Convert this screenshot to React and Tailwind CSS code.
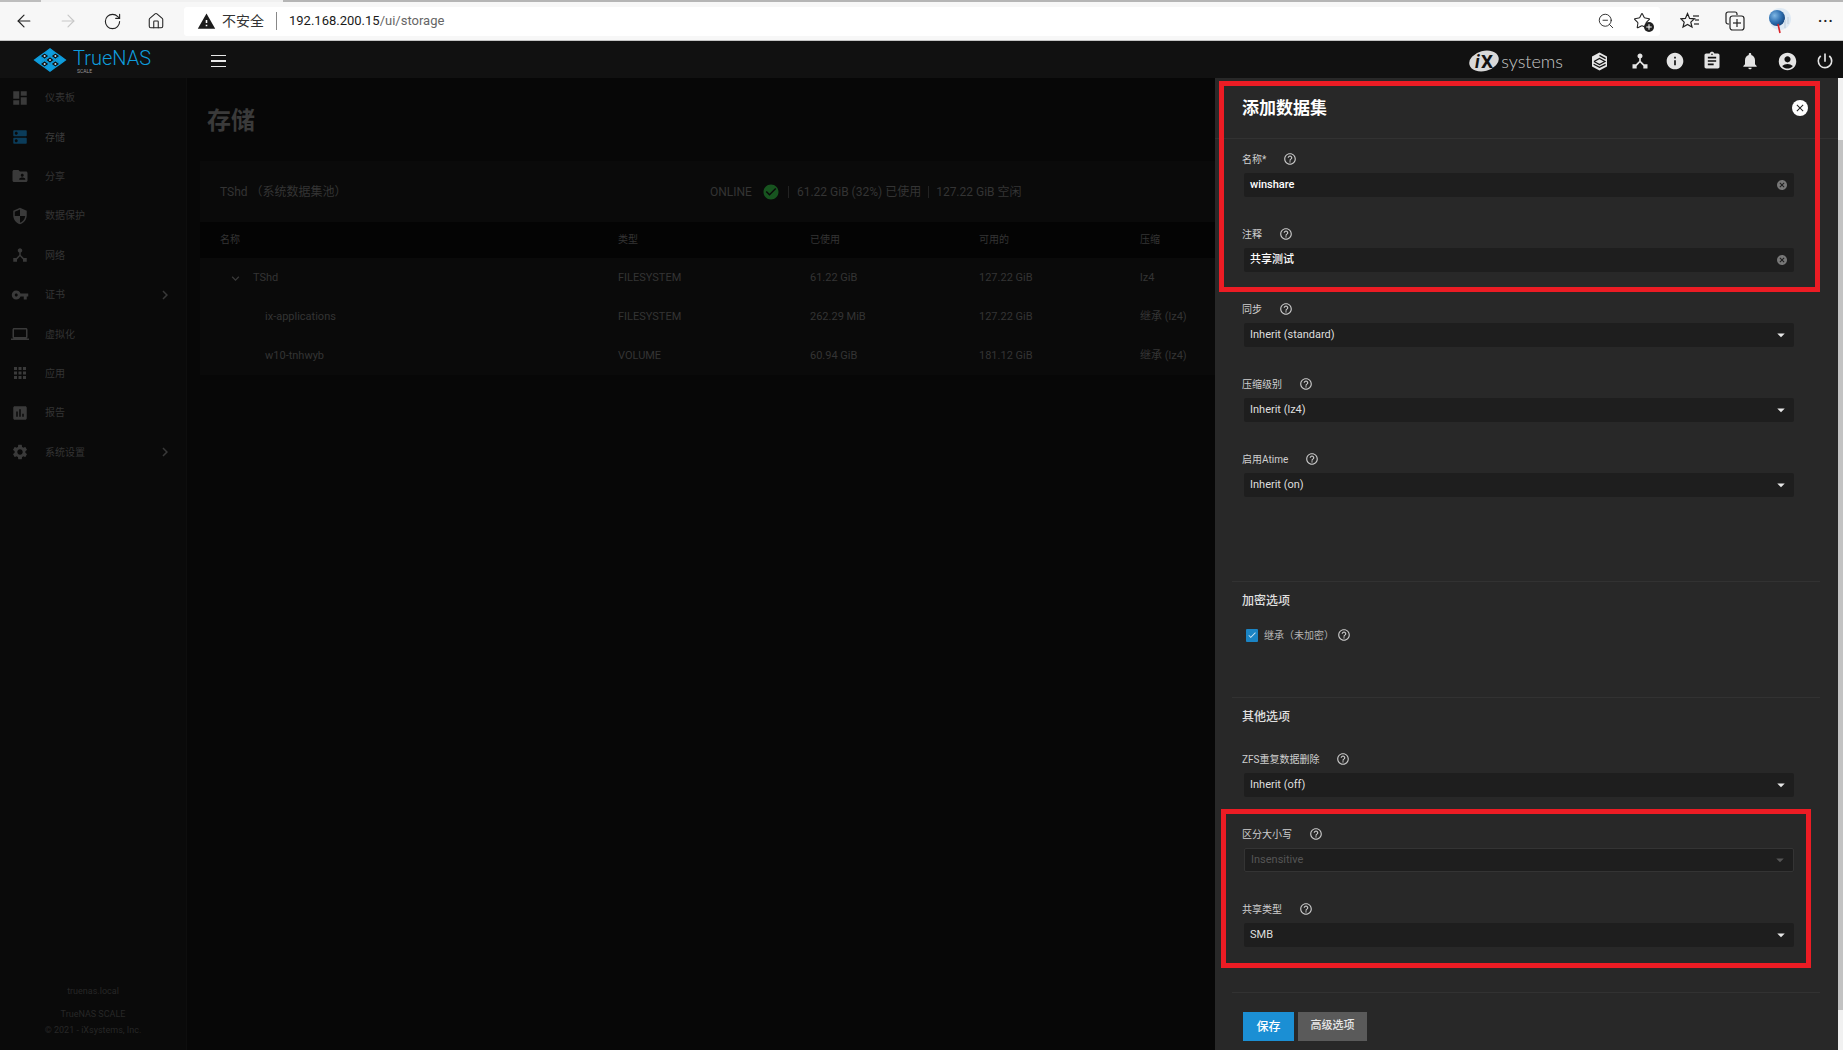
import React from "react";
import {
  MdDashboard, MdDns, MdFolderShared, MdSecurity, MdDeviceHub, MdVpnKey, MdLaptop, MdApps,
  MdAssessment, MdSettings, MdChevronRight, MdKeyboardArrowDown, MdInfo, MdAssignment,
  MdNotifications, MdAccountCircle, MdPowerSettingsNew, MdHelpOutline, MdCancel,
  MdArrowDropDown, MdCheckCircle, MdWarning, MdCheck, MdClose,
} from "react-icons/md";
import { ArrowLeft, ArrowRight, RotateCw, Home, ZoomOut, Star, Plus } from "lucide-react";

const nav = [
  [MdDashboard, "仪表板"],
  [MdDns, "存储", true],
  [MdFolderShared, "分享"],
  [MdSecurity, "数据保护"],
  [MdDeviceHub, "网络"],
  [MdVpnKey, "证书", false, true],
  [MdLaptop, "虚拟化"],
  [MdApps, "应用"],
  [MdAssessment, "报告"],
  [MdSettings, "系统设置", false, true],
];

const rows = [
  ["TShd", "FILESYSTEM", "61.22 GiB", "127.22 GiB", "lz4", 0],
  ["ix-applications", "FILESYSTEM", "262.29 MiB", "127.22 GiB", "继承 (lz4)", 1],
  ["w10-tnhwyb", "VOLUME", "60.94 GiB", "181.12 GiB", "继承 (lz4)", 1],
];

function Logo() {
  const cells = [];
  for (let i = 0; i < 3; i++) {
    for (let j = 0; j < 3; j++) {
      const cx = 17 + (i - j) * 5.4;
      const cy = 13 + (i + j - 2) * 3.9;
      const inner = i === 1 || j === 1;
      cells.push(
        <polygon
          key={`${i}-${j}`}
          points={`${cx - 4.6},${cy} ${cx},${cy - 3.4} ${cx + 4.6},${cy} ${cx},${cy + 3.4}`}
          fill={inner ? "#111" : "#0f9ddd"}
          stroke="#0f9ddd"
          strokeWidth="1.3"
        />
      );
      if (inner) {
        cells.push(<circle key={`d${i}-${j}`} cx={cx} cy={cy} r="1" fill="#b9dff2" />);
      }
    }
  }
  return (
    <svg width="34" height="26" viewBox="0 0 34 26">
      {cells}
    </svg>
  );
}

function Cube() {
  return (
    <svg width="17" height="19" viewBox="0 0 17 19">
      <polygon points="8.5,0.5 16,4.6 16,14.4 8.5,18.5 1,14.4 1,4.6" fill="#e6e6e6" />
      <polyline points="3,9.5 8.5,6.4 14,9.5 8.5,12.6 3,9.5" fill="none" stroke="#111" strokeWidth="1.2" />
      <polyline points="8.5,3.4 14.6,6.6" fill="none" stroke="#111" strokeWidth="1.2" />
      <polyline points="2.6,12.2 8.5,15.4 14.6,12.4" fill="none" stroke="#111" strokeWidth="1.2" />
    </svg>
  );
}

function IxMark() {
  return (
    <svg width="30" height="22" viewBox="0 0 30 22">
      <ellipse cx="15" cy="11" rx="15" ry="10" fill="#d8d8d8" transform="rotate(-14 15 11)" />
      <text x="6" y="18" fontSize="18" fontFamily="Roboto, sans-serif" fontStyle="italic" fontWeight="700" fill="#111">i</text>
      <text x="12" y="18" fontSize="19" fontFamily="Roboto, sans-serif" fontWeight="700" fill="#111">X</text>
    </svg>
  );
}

function Globe() {
  return (
    <svg width="24" height="26" viewBox="0 0 24 26">
      <defs>
        <radialGradient id="glb" cx="35%" cy="35%" r="70%">
          <stop offset="0%" stopColor="#7fb7e4" />
          <stop offset="60%" stopColor="#2e6fb0" />
          <stop offset="100%" stopColor="#15457c" />
        </radialGradient>
      </defs>
      <circle cx="12" cy="11" r="11" fill="#dfeaf4" />
      <circle cx="9" cy="10" r="8" fill="url(#glb)" />
      <line x1="10" y1="16" x2="12" y2="25" stroke="#d8232a" strokeWidth="1.6" />
      <line x1="17" y1="12" x2="17" y2="20" stroke="#c9d6e2" strokeWidth="1.6" />
      <line x1="20" y1="9" x2="20" y2="16" stroke="#c9d6e2" strokeWidth="1.4" />
    </svg>
  );
}

function FavAdd() {
  return (
    <span className="relative flex h-5 w-5 items-center justify-center">
      <Star size={18} strokeWidth={1.4} className="text-[#222]" />
      <span className="absolute -bottom-[1px] -right-[2px] flex h-[10px] w-[10px] items-center justify-center rounded-full bg-[#222]">
        <Plus size={8} strokeWidth={3} className="text-white" />
      </span>
    </span>
  );
}

function Favorites() {
  return (
    <svg width="20" height="18" viewBox="0 0 20 18" fill="none" stroke="#222" strokeWidth="1.2">
      <polygon points="7.5,1.5 9.6,6.4 14.5,6.8 10.8,10.1 12,15 7.5,12.4 3,15 4.2,10.1 0.8,6.8 5.4,6.4" />
      <line x1="13" y1="4" x2="19" y2="4" />
      <line x1="15" y1="8" x2="19" y2="8" />
      <line x1="14" y1="12" x2="19" y2="12" />
    </svg>
  );
}

function Collections() {
  return (
    <svg width="20" height="20" viewBox="0 0 20 20" fill="none" stroke="#222" strokeWidth="1.2">
      <path d="M4 13 H3 a2 2 0 0 1 -2 -2 V3 a2 2 0 0 1 2 -2 H10 a2 2 0 0 1 2 2 V4" />
      <rect x="5" y="5" width="14" height="14" rx="2.5" />
      <line x1="12" y1="8" x2="12" y2="16" />
      <line x1="8" y1="12" x2="16" y2="12" />
    </svg>
  );
}

function BrowserBar() {
  return (
    <div className="flex h-[41px] shrink-0 flex-col border-b border-[#c4c4c4] bg-[#f7f7f7]">
      <div className="flex h-[2px] shrink-0">
        <div className="w-[41px] bg-[#bdbdbd]" />
        <div className="w-[242px] bg-[#f0f0f0]" />
        <div className="flex-1 bg-[#b5b5b5]" />
      </div>
      <div className="flex flex-1 items-center">
        <div className="flex w-[184px] shrink-0 items-center pl-[14px]">
          <ArrowLeft size={20} strokeWidth={1.4} className="text-[#222]" />
          <ArrowRight size={20} strokeWidth={1.4} className="ml-[24px] text-[#c8c8c8]" />
          <RotateCw size={19} strokeWidth={1.4} className="ml-[25px] text-[#222]" />
          <Home size={18} strokeWidth={1.4} className="ml-[25px] text-[#222]" />
        </div>
        <div className="flex h-[29px] w-[1476px] shrink-0 items-center rounded-[3px] bg-white pl-[13px] pr-[8px]">
          <MdWarning size={19} className="shrink-0 text-[#1c1c1c]" />
          <span className="ml-[6px] text-[14px] text-[#333]">不安全</span>
          <span className="ml-[12px] h-[18px] w-px bg-[#888]" />
          <span className="ml-[12px] text-[13px] text-[#1a1a1a]">192.168.200.15</span>
          <span className="text-[13px] text-[#666]">/ui/storage</span>
          <span className="ml-auto flex items-center">
            <ZoomOut size={18} strokeWidth={1.2} className="text-[#222]" />
            <span className="ml-[17px]"><FavAdd /></span>
          </span>
        </div>
        <div className="flex flex-1 items-center pl-[20px]">
          <Favorites />
          <span className="ml-[25px]"><Collections /></span>
          <span className="ml-[23px]"><Globe /></span>
          <span className="ml-[26px] text-[14px] font-bold leading-none tracking-[1px] text-[#222]">···</span>
        </div>
      </div>
    </div>
  );
}

function TopBar() {
  return (
    <div className="flex h-[37px] shrink-0 items-center bg-[#111111]">
      <div className="ml-[33px] flex items-center">
        <Logo />
        <div className="ml-[6px] mt-[3px] flex flex-col">
          <span className="text-[20px] font-light leading-[20px] text-[#0f9ddd]">TrueNAS</span>
          <span className="ml-[4px] text-[5px] leading-[6px] text-[#9a9a9a]">SCALE</span>
        </div>
      </div>
      <div className="ml-[60px] mt-[3px] flex flex-col gap-[4px]">
        <div className="h-[1.5px] w-[15px] bg-[#e8e8e8]" />
        <div className="h-[1.5px] w-[15px] bg-[#e8e8e8]" />
        <div className="h-[1.5px] w-[15px] bg-[#e8e8e8]" />
      </div>
      <div className="ml-auto flex items-center pr-[8px] pt-[3px] text-[#e4e4e4]">
        <IxMark />
        <span className="ml-[2px] mr-[28px] font-['Lato',sans-serif] text-[18px] font-light leading-none text-[#c8c8c8]">systems</span>
        <Cube />
        <MdDeviceHub size={20} className="ml-[22px]" />
        <MdInfo size={20} className="ml-[15px]" />
        <MdAssignment size={20} className="ml-[17px]" />
        <MdNotifications size={20} className="ml-[18px]" />
        <MdAccountCircle size={21} className="ml-[17px]" />
        <MdPowerSettingsNew size={20} className="ml-[17px]" />
      </div>
    </div>
  );
}

function Sidebar() {
  return (
    <aside className="flex w-[187px] shrink-0 flex-col border-r border-[#0e0e0e] bg-[#0a0a0a]">
      {nav.map(([Icon, label, active, arrow]) => (
        <div key={label} className="flex h-[39.4px] items-center pl-[11px] pr-[12px]">
          <Icon size={18} className={active ? "text-[#0b3c5a]" : "text-[#3a3a3a]"} />
          <span className={`ml-[16px] text-[10px] ${active ? "text-[#3c3c3c]" : "text-[#343434]"}`}>{label}</span>
          {arrow && <MdChevronRight size={18} className="ml-auto text-[#383838]" />}
        </div>
      ))}
      <div className="mt-auto flex flex-col items-center pb-[12px] text-[9px] leading-[16px] text-[#272727]">
        <span className="mb-[7px]">truenas.local</span>
        <span>TrueNAS SCALE</span>
        <span>© 2021 - iXsystems, Inc.</span>
      </div>
    </aside>
  );
}

function Main() {
  return (
    <main className="min-w-0 flex-1 bg-[#070707] pl-[13px]">
      <h1 className="ml-[7px] mt-[27px] text-[24px] font-bold leading-[32px] text-[#3a3a3a]">存储</h1>
      <div className="mt-[24px] bg-[#0a0a0a]">
        <div className="flex h-[61px] items-center pl-[20px] text-[12px] text-[#343434]">
          <span className="w-[490px] shrink-0">TShd （系统数据集池）</span>
          <span>ONLINE</span>
          <MdCheckCircle size={18} className="ml-[10px] text-[#17541f]" />
          <span className="ml-[8px] h-[12px] w-px bg-[#222]" />
          <span className="ml-[8px]">61.22 GiB (32%) 已使用</span>
          <span className="ml-[7px] h-[12px] w-px bg-[#222]" />
          <span className="ml-[7px]">127.22 GiB 空闲</span>
        </div>
        <div className="grid h-[36px] grid-cols-[398px_192px_169px_161px_1fr] items-center bg-[#040404] pb-[2px] pl-[20px] text-[10px] text-[#343434]">
          <span>名称</span>
          <span>类型</span>
          <span>已使用</span>
          <span>可用的</span>
          <span>压缩</span>
        </div>
        {rows.map(([name, type, used, avail, comp, child]) => (
          <div key={name} className="grid h-[39px] grid-cols-[398px_192px_169px_161px_1fr] items-center pl-[20px] pt-[2px] text-[11px] text-[#343434]">
            {child ? (
              <span className="pl-[45px]">{name}</span>
            ) : (
              <span className="flex items-center pl-[8px]">
                <MdKeyboardArrowDown size={15} className="text-[#3a3a3a]" />
                <span className="ml-[10px]">{name}</span>
              </span>
            )}
            <span>{type}</span>
            <span>{used}</span>
            <span>{avail}</span>
            <span>{comp}</span>
          </div>
        ))}
      </div>
    </main>
  );
}

function Label({ text }) {
  return (
    <div className="flex h-6 items-center gap-[17px] text-[10px] text-[#cfcfcf]">
      <span>{text}</span>
      <MdHelpOutline size={14} className="text-[#c8c8c8]" />
    </div>
  );
}

function Field({ label, value, select, disabled, strong }) {
  return (
    <div className="h-[75px] pl-[27px]">
      <Label text={label} />
      <div
        className={`ml-[2px] mt-[2px] flex h-6 w-[550px] items-center rounded-[2px] bg-[#1e1e1e] pl-[6px] text-[11px] ${
          select ? "pr-[4px]" : "pr-[6px]"
        } ${disabled ? "border border-[#343434] text-[#555]" : strong ? "font-medium text-white" : "text-[#dedede]"}`}
      >
        <span>{value}</span>
        {select ? (
          <MdArrowDropDown size={18} className={`ml-auto ${disabled ? "text-[#555]" : "text-[#e8e8e8]"}`} />
        ) : (
          <MdCancel size={12} className="ml-auto text-[#777]" />
        )}
      </div>
    </div>
  );
}

function Panel() {
  return (
    <section className="flex w-[623px] shrink-0 flex-col overflow-hidden bg-[#282828]">
      <div className="flex h-[61px] shrink-0 items-center border-b border-[#323232] pl-[27px] pr-[30px]">
        <h2 className="pt-[2px] text-[17px] font-bold text-white">添加数据集</h2>
        <span className="ml-auto flex h-[16px] w-[16px] items-center justify-center rounded-full bg-white">
          <MdClose size={12} className="text-[#222]" />
        </span>
      </div>
      <div className="pt-[8px]">
        <Field label="名称*" value="winshare" strong />
        <Field label="注释" value="共享测试" strong />
        <Field label="同步" value="Inherit (standard)" select />
        <Field label="压缩级别" value="Inherit (lz4)" select />
        <Field label="启用Atime" value="Inherit (on)" select />
      </div>
      <div className="ml-[17px] mr-[18px] mt-[59px] border-t border-[#323232]" />
      <div className="flex h-[38px] items-center pl-[27px] text-[12px] font-medium text-[#e0e0e0]">加密选项</div>
      <div className="flex h-[30px] items-center pl-[31px]">
        <span className="flex h-[13px] w-[12px] items-center justify-center rounded-[1px] bg-[#1b84c4]">
          <MdCheck size={10} className="text-[#cfe6f5]" />
        </span>
        <span className="ml-[6px] text-[10px] text-[#b4b4b4]">继承（未加密）</span>
        <MdHelpOutline size={14} className="ml-[3px] text-[#c8c8c8]" />
      </div>
      <div className="ml-[17px] mr-[18px] mt-[47px] border-t border-[#323232]" />
      <div className="mb-[11px] flex h-[38px] items-center pl-[27px] text-[12px] font-medium text-[#e0e0e0]">其他选项</div>
      <Field label="ZFS重复数据删除" value="Inherit (off)" select />
      <Field label="区分大小写" value="Insensitive" select disabled />
      <Field label="共享类型" value="SMB" select />
      <div className="ml-[17px] mr-[18px] mt-[20px] border-t border-[#323232]" />
      <div className="ml-[28px] mt-[19px] flex gap-[4px]">
        <button className="h-[29px] w-[51px] bg-[#1b8fd4] text-[12px] font-medium text-white">保存</button>
        <button className="h-[29px] w-[69px] bg-[#5a5a5a] text-[11px] font-medium text-[#e6e6e6]">高级选项</button>
      </div>
    </section>
  );
}

function Scrollbar() {
  return (
    <div className="flex w-[5px] shrink-0 flex-col bg-[#f1f1f1]">
      <div className="h-[62px] shrink-0" />
      <div className="h-[870px] shrink-0 bg-[#c2c2c2]" />
    </div>
  );
}

export default function App() {
  return (
    <div className="relative flex h-[1050px] w-[1843px] flex-col overflow-hidden bg-black font-['Roboto','Noto_Sans_CJK_SC',sans-serif]">
      <BrowserBar />
      <TopBar />
      <div className="flex min-h-0 flex-1">
        <Sidebar />
        <Main />
        <Panel />
        <Scrollbar />
      </div>
      <div className="pointer-events-none absolute left-[1219px] top-[81px] h-[211px] w-[601px] border-[5px] border-[#ec1c24]" />
      <div className="pointer-events-none absolute left-[1221px] top-[809px] h-[159px] w-[590px] border-[5px] border-[#ec1c24]" />
    </div>
  );
}
